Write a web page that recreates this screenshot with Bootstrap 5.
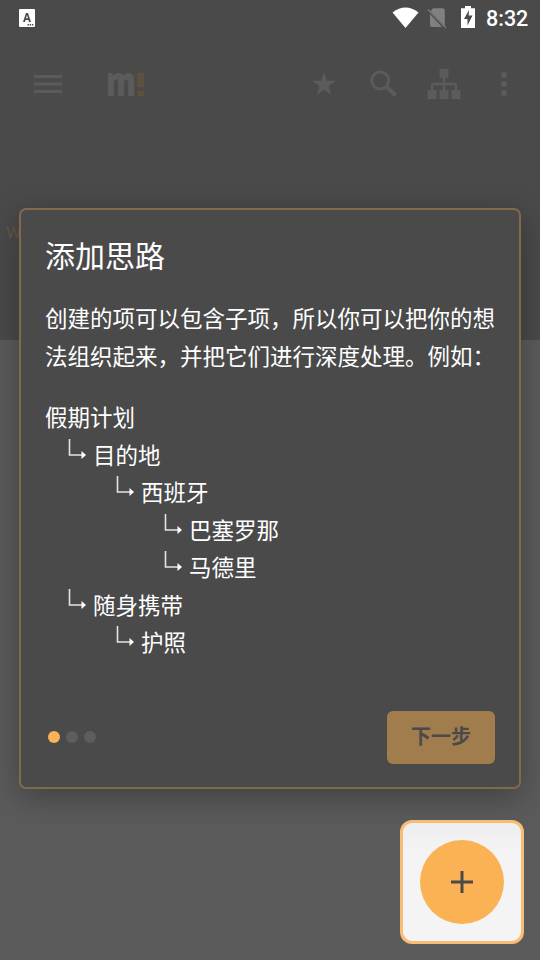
<!DOCTYPE html>
<html lang="zh-CN">
<head>
<meta charset="utf-8">
<meta name="viewport" content="width=device-width, initial-scale=1">
<title>添加思路</title>
<link href="https://cdn.jsdelivr.net/npm/bootstrap@5.3.0/dist/css/bootstrap.min.css" rel="stylesheet">
<style>
body { font-family: Roboto, "Noto Sans CJK SC", sans-serif; background: #5b5b5b; }
.screen { width: 540px; height: 960px; background: linear-gradient(#4a4a4a 340px, #5b5b5b 340px); }
.screen svg { display: block; flex: none; }
.statusbar { height: 36px; padding: 0 12px 0 19px; }
.clock { font-size: 21.5px; line-height: 36px; font-weight: 500; width: 42px; margin-left: 10px; padding-top: 1px; white-space: nowrap; }
.toolbar { height: 96px; padding: 0 28px 0 34px; color: #5b5b5b; }
.toolbar .logo { margin-left: 44px; }
.lens { margin-left: 34px; }
.sitemap { margin-left: 29px; }
.more { margin: 0 4px 0 39px; }
.peek { left: 6px; top: 218px; font-size: 20px; line-height: 26px; color: #655645; }
.tour { width: 502px; height: 581px; margin: 76px 0 0 19px; padding: 22px 24px 23px 24px; background: #4a4a4a; border: 2px solid #82694d; border-radius: 7px; box-shadow: 0 8px 32px rgba(0,0,0,.3); color: #fff; font-family: "Noto Sans CJK SC", sans-serif; }
.tour h1 { font-size: 30px; line-height: 44px; font-weight: 400; }
.tour-text { font-size: 22.5px; line-height: 37.5px; }
.tour-text p { margin: 23px -4px 24px 0; }
.tree-row { height: 37.5px; }
.tree-row svg { margin-right: 6px; margin-top: -10px; }
.lv1 { padding-left: 23px; }
.lv2 { padding-left: 71px; }
.lv3 { padding-left: 119px; }
.dots { gap: 6px; margin-left: 3px; margin-bottom: 2px; }
.dot { width: 12px; height: 12px; background: #5d5d5d; }
.dot.on { background: #fab254; }
.next { width: 108px; height: 53px; padding: 0 0 3px; background: #a17d4d; color: #4a4a4a; border: 0; border-radius: 6px; font-size: 20px; font-weight: 700; line-height: 50px; }
.spot { width: 124px; height: 124px; margin: 31px 16px 0 auto; border: 3px solid #f8bc73; border-radius: 12px; background: linear-gradient(#eeeeee, #f4f4f4 30px); }
.fab { width: 84px; height: 84px; background: #fab254; border: 0; }
</style>
</head>
<body>
<svg class="d-none"><symbol id="branch" viewBox="0 0 19 21"><path d="M1.500 0v16H15" fill="none" stroke="#e2e6e6" stroke-width="1.600"/><path d="M13.500 12v8l4.500-4z" fill="#fff"/></symbol></svg>
<div class="screen position-relative overflow-hidden d-flex flex-column">
  <div class="statusbar d-flex align-items-center flex-shrink-0 text-white">
    <svg width="16" height="18" viewBox="0 0 16 18"><rect width="16" height="18" rx="1" fill="#fff"/><path d="M4 13 7 4h2l3 9h-2L9.500 11h-3L6 13zM7 9.200h2L8 6z" fill="#4a4a4a"/><path d="M8.500 15.800h1.400m.8 0h1.400m.8 0h1.400" stroke="#4a4a4a" stroke-width="1.500"/></svg>
    <svg class="ms-auto" width="84" height="24" viewBox="0 0 84 24"><path d="M.5 6Q13.500-4 26.500 6L13.500 21.500Z" fill="#fff" transform="translate(0 .5)"/><path d="M41 2.200h9.500Q52.800 2.200 52.800 4.300V20L38.500 5.300zM38 8V18.700Q38 21 40 21H50z" fill="#808080"/><path d="m36 3.500 18 18.500" stroke="#777" stroke-width="1.500"/><path d="M69 2.200h4V0h6v2.200h4V22H69z" fill="#fff"/><path d="M77 4 72 13h3.500v6.500l5-10h-3.800z" fill="#4a4a4a"/></svg>
    <div class="clock">8:32</div>
  </div>

  <div class="toolbar d-flex align-items-center flex-shrink-0">
    <svg width="28" height="18" viewBox="0 0 28 18"><path d="M0 1.500h28M0 9h28M0 16.500h28" stroke="currentColor" stroke-width="3"/></svg>
    <svg class="logo overflow-visible" width="38" height="26" viewBox="0 0 38 26"><text x="0" y="25" font-family="Open Sans" font-size="41" font-weight="800" textLength="30" lengthAdjust="spacingAndGlyphs" fill="currentColor">m</text><path d="M31.500 2h6.500v14h-6.500zm0 18h6.500v5h-6.500z" fill="#5f5140"/></svg>
    <svg class="ms-auto" width="24" height="24" viewBox="0 0 24 24"><path d="m12 0 2.800 8.700H24l-7.400 5.500 2.800 9L12 17.700l-7.400 5.500 2.800-9L0 8.700h9.200z" fill="currentColor"/></svg>
    <svg width="28" height="28" viewBox="0 0 28 28" class="lens"><circle cx="10.200" cy="10.500" r="8.500" fill="none" stroke="currentColor" stroke-width="3"/><path d="m16 16 9.500 9.500" stroke="currentColor" stroke-width="4"/></svg>
    <svg width="34" height="30" viewBox="0 0 34 30" class="sitemap"><path d="M12.500 0h9v9h-9zM.5 21h9v9h-9zm12 0h9v9h-9zm12 0h9v9h-9z" fill="currentColor"/><path d="M17 8v14M5 22v-5q0-2 2-2h20q2 0 2 2v5" fill="none" stroke="currentColor" stroke-width="2.400"/></svg>
    <svg width="8" height="24" viewBox="0 0 8 24" class="more"><g fill="currentColor"><circle cx="4" cy="3" r="3"/><circle cx="4" cy="12" r="3"/><circle cx="4" cy="21" r="3"/></g></svg>
  </div>

  <div class="peek position-absolute">w</div>

  <section class="tour d-flex flex-column flex-shrink-0 position-relative">
    <h1 class="mb-0">添加思路</h1>
    <div class="tour-text">
      <p>创建的项可以包含子项，所以你可以把你的想<br>法组织起来，并把它们进行深度处理。例如：</p>
      <div class="tree-row">假期计划</div>
      <div class="tree-row d-flex align-items-center lv1"><svg width="19" height="21"><use href="#branch"/></svg>目的地</div>
      <div class="tree-row d-flex align-items-center lv2"><svg width="19" height="21"><use href="#branch"/></svg>西班牙</div>
      <div class="tree-row d-flex align-items-center lv3"><svg width="19" height="21"><use href="#branch"/></svg>巴塞罗那</div>
      <div class="tree-row d-flex align-items-center lv3"><svg width="19" height="21"><use href="#branch"/></svg>马德里</div>
      <div class="tree-row d-flex align-items-center lv1"><svg width="19" height="21"><use href="#branch"/></svg>随身携带</div>
      <div class="tree-row d-flex align-items-center lv2"><svg width="19" height="21"><use href="#branch"/></svg>护照</div>
    </div>
    <div class="mt-auto d-flex align-items-center justify-content-between">
      <div class="dots d-flex"><span class="dot on rounded-circle"></span><span class="dot rounded-circle"></span><span class="dot rounded-circle"></span></div>
      <button class="next btn" type="button">下一步</button>
    </div>
  </section>

  <div class="spot d-flex align-items-center justify-content-center flex-shrink-0 position-relative">
    <button class="fab rounded-circle d-flex align-items-center justify-content-center p-0" type="button" aria-label="添加"><svg width="22" height="22" viewBox="0 0 22 22"><path d="M11 0v22M0 11h22" stroke="#4a4a4a" stroke-width="3"/></svg></button>
  </div>
</div>
<script src="https://cdn.jsdelivr.net/npm/bootstrap@5.3.0/dist/js/bootstrap.bundle.min.js"></script>
</body>
</html>
